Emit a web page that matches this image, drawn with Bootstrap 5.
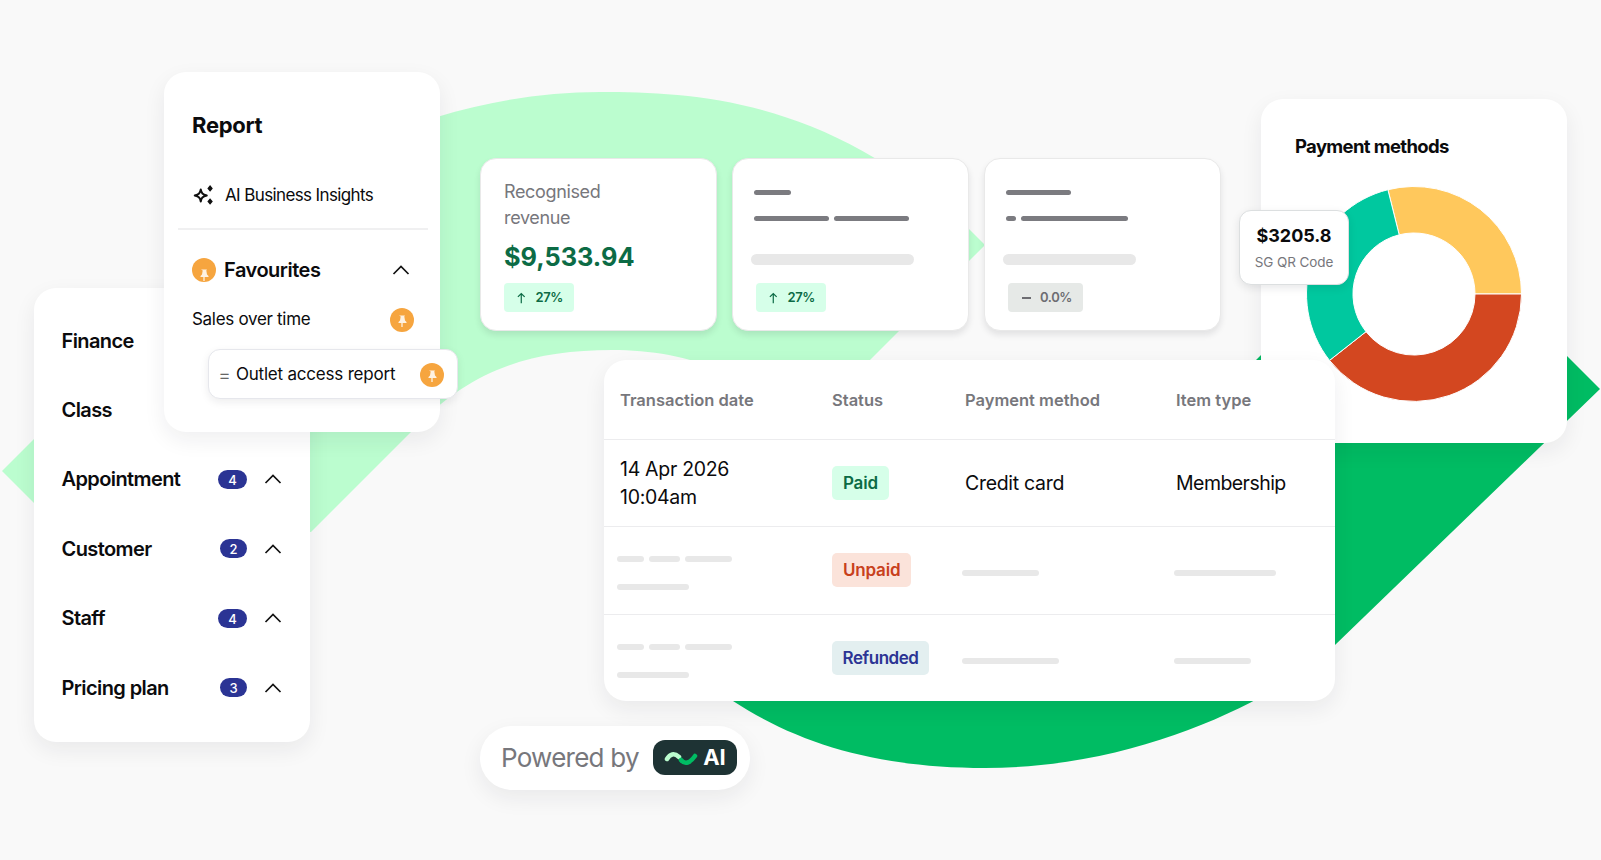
<!DOCTYPE html>
<html lang="en">
<head>
    <meta charset="UTF-8">
    <meta name="viewport" content="width=device-width, initial-scale=1.0">
    <title>Reports</title>
    <link href="https://cdn.jsdelivr.net/npm/bootstrap@5.3.2/dist/css/bootstrap.min.css" rel="stylesheet">
    <script src="https://cdn.jsdelivr.net/npm/bootstrap@5.3.2/dist/js/bootstrap.bundle.min.js"></script>
    <style>
        body { background: #f9f9f9; font-family: "Inter", "Liberation Sans", sans-serif; color: #0b0b0d; overflow: hidden; }
        .stage { width: 1601px; height: 860px; }
        .blobs { left: 0; top: 0; }

        /* cards on the free canvas */
        .panel { position: absolute; background: #fff; border: 0; border-radius: 22px; box-shadow: 0 8px 22px rgba(30, 30, 40, .07); }
        .report-panel { left: 164px; top: 72px; width: 276px; height: 360px; padding: 38px 0 0 28px; z-index: 4; }
        .menu-panel { left: 34px; top: 288px; width: 276px; height: 454px; padding: 18px 28px 0 28px; z-index: 3; }
        .kpi-panel { top: 158px; width: 237px; height: 173px; border: 1px solid #e9e9e9; border-radius: 16px; padding: 20px 23px 19px; box-shadow: 0 4px 6px rgba(30, 30, 40, .1); z-index: 2; }
        .kpi-one { left: 480px; }
        .kpi-two { left: 732px; padding-left: 21px; }
        .kpi-three { left: 984px; padding-left: 21px; }
        .pay-panel { left: 1261px; top: 99px; width: 306px; height: 344px; padding: 33px 0 0 34px; }
        .table-panel { left: 604px; top: 360px; width: 731px; height: 341px; overflow: hidden; z-index: 2; }
        .powered-panel { left: 480px; top: 726px; width: 270px; height: 64px; padding: 0 13px 0 21px; border-radius: 32px; z-index: 2; }

        .report-title { font-size: 22px; font-weight: 700; line-height: 30px; letter-spacing: -.3px; margin-bottom: 43px; }
        .insight-row { font-size: 17px; line-height: 24px; gap: 10px; letter-spacing: -.62px; }
        .report-rule { width: 250px; height: 2px; background: #f0f0f1; margin: 21px 0 28px -14px; }
        .fav-row { width: 222px; height: 24px; font-size: 20px; font-weight: 600; letter-spacing: -.5px; }
        .fav-row .pin-dot { margin-right: 8px; }
        .sales-row { width: 222px; margin-top: 26px; height: 24px; font-size: 17px; letter-spacing: -.3px; }
        .outlet-chip { position: absolute; left: 44px; top: 277px; width: 250px; height: 50px; background: #fff; border: 1px solid #e6e7ec; border-radius: 12px; box-shadow: 0 3px 8px rgba(30, 30, 40, .08); padding: 1px 13px 0 9px; font-size: 17px; letter-spacing: -.2px; z-index: 5; }
        .equals { color: #666; margin-right: 5px; font-size: 20px; font-weight: 300; line-height: 1; }
        .pin-dot { width: 24px; height: 24px; border-radius: 50%; background: #f6a53f; flex: none; }

        .menu-row { height: 69.4px; font-size: 20px; font-weight: 600; letter-spacing: -.6px; margin-left: -.5px; }
        .count-pill { background: #2b3494; color: #fff; font-size: 13px; font-weight: 500; letter-spacing: 0; height: 19px; width: 29px; padding: 0; border-radius: 10px; line-height: 20px; margin-right: 17px; }
        .count-pill.narrow { width: 27px; }
        .chev { flex: none; }

        .kpi-label { color: #77777c; font-size: 18px; line-height: 26px; letter-spacing: -.35px; }
        .kpi-value { color: #0c6b45; font-size: 25.3px; font-weight: 700; line-height: 34px; margin-top: 9px; }
        .trend { height: 29px; border-radius: 4px; font-size: 13px; font-weight: 600; gap: 9px; padding: 0 11px 0 12px; letter-spacing: -.4px; flex: none; }
        .trend-up { background: #d6ffe9; color: #0c6b45; width: 70px; margin-top: 9px; }
        .trend-flat { background: #e6e9e7; color: #6d6d72; width: 75px; padding-left: 14px; }
        .badge-inset { margin-left: 2px; }
        .bar { height: 5px; border-radius: 3px; background: #7b7b80; flex: none; }
        .bar-soft { background: #e8e8e8; height: 6px; }
        .bar-fat { background: #e8e8e8; height: 11px; border-radius: 6px; margin: 23px 0 18px -3px; flex: none; }
        .bar-line { gap: 5px; height: 26px; flex: none; }
        .bw-37 { width: 37px; } .bw-75 { width: 75px; } .bw-65 { width: 65px; } .bw-10 { width: 10px; } .bw-107 { width: 107px; }
        .bw-163 { width: 163px; } .bw-133 { width: 133px; }
        .bw-27 { width: 27px; } .bw-31 { width: 31px; } .bw-47 { width: 47px; } .bw-72 { width: 72px; }
        .bw-77 { width: 77px; } .bw-102 { width: 102px; } .bw-97 { width: 97px; }

        .tx-table { table-layout: fixed; width: 731px; margin: 0; }
        .tx-table th, .tx-table td { padding: 0; vertical-align: middle; border-bottom: 1px solid #ececee; background: transparent; }
        .tx-table tr:last-child td { border-bottom: 0; }
        .tx-table th { height: 79px; padding-top: 2px; color: #77777c; font-size: 16.5px; font-weight: 600; letter-spacing: 0; }
        .tx-table td { height: 87.5px; font-size: 19.5px; letter-spacing: -.3px; line-height: 28px; color: #0b0b0d; }
        .tx-table th:first-child, .tx-table td:first-child { padding-left: 16px; width: 228px; }
        .tx-table th:nth-child(2) { width: 133px; }
        .tx-table th:nth-child(3) { width: 211px; }
        .tx-table td:nth-child(4) { letter-spacing: -.55px; }
        .bar-cell { margin-left: -3px; }
        .bar-cell.nudge { margin-top: 5px; margin-left: -2px; }
        .tx-table td:nth-child(3) .nudge { margin-left: -3px; }
        .bar-stack { gap: 5px; margin-top: 6px; margin-bottom: 22px; }
        .status { display: inline-block; font-size: 17px; font-weight: 600; line-height: 35px; height: 34px; padding: 0 11px; border-radius: 5px; letter-spacing: -.2px; }
        .status-paid { background: #d6ffe9; color: #0c6b45; line-height: 34px; }
        .status-unpaid { background: #fbe3da; color: #c8401c; }
        .status-refunded { background: #e3eff0; color: #2b3494; padding: 0 10.5px; letter-spacing: -.45px; }

        .pay-title { font-size: 18.5px; font-weight: 700; line-height: 28px; letter-spacing: -.65px; }
        .donut { position: absolute; left: 43px; top: 85px; z-index: 3; }
        .qr-tip { position: absolute; left: 1239px; top: 210px; width: 110px; height: 75px; background: #fff; border: 1px solid #dcdfe0; border-radius: 12px; box-shadow: 0 3px 8px rgba(30, 30, 40, .1); z-index: 5; }
        .qr-amount { font-size: 18px; font-weight: 700; line-height: 26px; }
        .qr-name { font-size: 13.5px; color: #77777c; line-height: 20px; margin-top: 3px; letter-spacing: -.1px; }

        .powered-text { color: #77777c; font-size: 26px; letter-spacing: -.75px; margin-top: -2px; }
        .ai-pill { background: #1e3334; color: #fff; width: 84px; height: 35px; border-radius: 12px; font-size: 22px; font-weight: 700; gap: 5px; margin-top: -1px; }
    </style>
</head>
<body>
    <svg width="0" height="0" class="position-absolute">
        <symbol id="pin" viewBox="0 0 24 24">
            <path d="M9 6.500h6l-.7 1 .7 4 1.500 1.600v.9H8.500v-.9L10 11.500l.7-4z" fill="#fff" opacity=".85"/>
            <path d="M12 14v4" stroke="#fff" stroke-width="1.300" opacity=".85"/>
        </symbol>
        <symbol id="chevron" viewBox="0 0 18 10">
            <path d="M1.500 9 9 1.500 16.500 9" fill="none" stroke="#111" stroke-width="1.700"/>
        </symbol>
        <symbol id="arrowup" viewBox="0 0 14 16">
            <path d="M7 15V2M2.500 6.500 7 2l4.500 4.500" fill="none" stroke="currentColor" stroke-width="1.600"/>
        </symbol>
    </svg>

    <div class="stage position-relative">
        <!-- background ribbons -->
        <svg class="blobs position-absolute" width="1601" height="860" viewBox="0 0 1601 860">
            <path fill="#bbfdcf" d="M2 471 L250 223 C330 143 470 92 600 92 C700 92 830 100 969 229 L985 245 L870 360 L860 372 L720 372 C690 356 650 350 612 350 C530 350 470 370 413 430 L311 532 L63 532 Z"/>
            <path fill="#00bc63" d="M1255 361 L1262 354 L1567 356 L1600 389 L1335 645 C1290 690 1150 768 985 768 C880 768 800 745 733 701 L733 500 Z"/>
        </svg>

        <!-- payment methods -->
        <div class="card panel pay-panel">
            <div class="pay-title">Payment methods</div>
            <svg class="donut" width="220" height="220" viewBox="0 0 220 220">
                <g stroke="#fff" stroke-width="1">
                    <path fill="#ffc85c" d="M83.900 5.700A107.500 107.500 0 0 1 217.500 110L171 110A61 61 0 0 0 95.200 50.800Z"/>
                    <path fill="#d34720" d="M217.500 110A107.500 107.500 0 0 1 25.500 176.400L62 147.700A61 61 0 0 0 171 110Z"/>
                    <path fill="#00c89f" d="M25.500 176.400A107.500 107.500 0 0 1 83.900 5.700L95.200 50.800A61 61 0 0 0 62 147.700Z"/>
                </g>
            </svg>
        </div>
        <div class="qr-tip d-flex flex-column align-items-center justify-content-center">
            <div class="qr-amount">$3205.8</div>
            <div class="qr-name">SG QR Code</div>
        </div>

        <!-- report sidebar -->
        <div class="card panel report-panel">
            <div class="report-title">Report</div>
            <div class="insight-row d-flex align-items-center">
                <svg width="23" height="23" viewBox="0 0 21 21" class="flex-none">
                    <path d="M8 5C8.600 8.400 9.600 9.500 13.500 10.500 9.600 11.500 8.600 12.600 8 16 7.400 12.600 6.400 11.500 2.500 10.500 6.400 9.500 7.400 8.400 8 5Z" fill="none" stroke="#111" stroke-width="1.800" stroke-linejoin="round"/>
                    <path d="M16.500 1 19 4 16.500 7 14 4Z M16.500 13 19 16 16.500 19 14 16Z" fill="#111"/>
                </svg>
                <span>AI Business Insights</span>
            </div>
            <div class="report-rule"></div>
            <div class="fav-row d-flex align-items-center">
                <span class="pin-dot"><svg width="24" height="24"><use href="#pin"/></svg></span>
                <span class="flex-grow-1">Favourites</span>
                <svg class="chev me-1" width="18" height="10"><use href="#chevron"/></svg>
            </div>
            <div class="sales-row d-flex align-items-center justify-content-between">
                <span>Sales over time</span>
                <span class="pin-dot"><svg width="24" height="24"><use href="#pin"/></svg></span>
            </div>
            <div class="outlet-chip d-flex align-items-center">
                <span class="equals">=</span>
                <span class="flex-grow-1">Outlet access report</span>
                <span class="pin-dot"><svg width="24" height="24"><use href="#pin"/></svg></span>
            </div>
        </div>

        <!-- left menu -->
        <div class="card panel menu-panel">
            <div class="menu-row d-flex align-items-center">Finance</div>
            <div class="menu-row d-flex align-items-center">Class</div>
            <div class="menu-row d-flex align-items-center">
                <span class="flex-grow-1">Appointment</span>
                <span class="badge count-pill">4</span>
                <svg class="chev" width="18" height="10"><use href="#chevron"/></svg>
            </div>
            <div class="menu-row d-flex align-items-center">
                <span class="flex-grow-1">Customer</span>
                <span class="badge count-pill narrow">2</span>
                <svg class="chev" width="18" height="10"><use href="#chevron"/></svg>
            </div>
            <div class="menu-row d-flex align-items-center">
                <span class="flex-grow-1">Staff</span>
                <span class="badge count-pill">4</span>
                <svg class="chev" width="18" height="10"><use href="#chevron"/></svg>
            </div>
            <div class="menu-row d-flex align-items-center">
                <span class="flex-grow-1">Pricing plan</span>
                <span class="badge count-pill narrow">3</span>
                <svg class="chev" width="18" height="10"><use href="#chevron"/></svg>
            </div>
        </div>

        <!-- kpi cards -->
        <div class="card panel kpi-panel kpi-one">
            <div class="kpi-label">Recognised<br>revenue</div>
            <div class="kpi-value">$9,533.94</div>
            <div class="trend trend-up d-flex align-items-center"><svg width="14" height="16"><use href="#arrowup"/></svg>27%</div>
        </div>
        <div class="card panel kpi-panel kpi-two">
            <div class="bar-line d-flex align-items-center"><div class="bar bw-37"></div></div>
            <div class="bar-line d-flex align-items-center"><div class="bar bw-75"></div><div class="bar bw-75"></div></div>
            <div class="bar-fat bw-163"></div>
            <div class="trend trend-up d-flex align-items-center mt-0 badge-inset"><svg width="14" height="16"><use href="#arrowup"/></svg>27%</div>
        </div>
        <div class="card panel kpi-panel kpi-three">
            <div class="bar-line d-flex align-items-center"><div class="bar bw-65"></div></div>
            <div class="bar-line d-flex align-items-center"><div class="bar bw-10"></div><div class="bar bw-107"></div></div>
            <div class="bar-fat bw-133"></div>
            <div class="trend trend-flat d-flex align-items-center badge-inset"><svg width="12" height="2"><rect width="10" height="2" fill="currentColor"/></svg>0.0%</div>
        </div>

        <!-- transactions -->
        <div class="card panel table-panel">
            <table class="table tx-table">
                <thead>
                    <tr><th>Transaction date</th><th>Status</th><th>Payment method</th><th>Item type</th></tr>
                </thead>
                <tbody>
                    <tr>
                        <td>14 Apr 2026<br>10:04am</td>
                        <td><span class="status status-paid">Paid</span></td>
                        <td>Credit card</td>
                        <td>Membership</td>
                    </tr>
                    <tr>
                        <td>
                            <div class="bar-cell d-flex bar-stack"><div class="bar bar-soft bw-27"></div><div class="bar bar-soft bw-31"></div><div class="bar bar-soft bw-47"></div></div>
                            <div class="bar-cell bar bar-soft bw-72"></div>
                        </td>
                        <td><span class="status status-unpaid">Unpaid</span></td>
                        <td><div class="bar-cell nudge bar bar-soft bw-77"></div></td>
                        <td><div class="bar-cell nudge bar bar-soft bw-102"></div></td>
                    </tr>
                    <tr>
                        <td>
                            <div class="bar-cell d-flex bar-stack"><div class="bar bar-soft bw-27"></div><div class="bar bar-soft bw-31"></div><div class="bar bar-soft bw-47"></div></div>
                            <div class="bar-cell bar bar-soft bw-72"></div>
                        </td>
                        <td><span class="status status-refunded">Refunded</span></td>
                        <td><div class="bar-cell nudge bar bar-soft bw-97"></div></td>
                        <td><div class="bar-cell nudge bar bar-soft bw-77"></div></td>
                    </tr>
                </tbody>
            </table>
        </div>

        <!-- powered by -->
        <div class="card panel powered-panel d-flex flex-row align-items-center justify-content-between">
            <span class="powered-text">Powered by</span>
            <span class="ai-pill d-flex align-items-center justify-content-center">
                <svg width="34" height="16" viewBox="0 0 34 16" fill="none" stroke-width="4.500" stroke-linecap="round">
                    <path d="M3 9C6 4 10 2.500 15 7" stroke="#bbfdcf"/>
                    <path d="M17 10C21 15 26 13 31 6" stroke="#00bc63"/>
                </svg>
                AI
            </span>
        </div>
    </div>
</body>
</html>
